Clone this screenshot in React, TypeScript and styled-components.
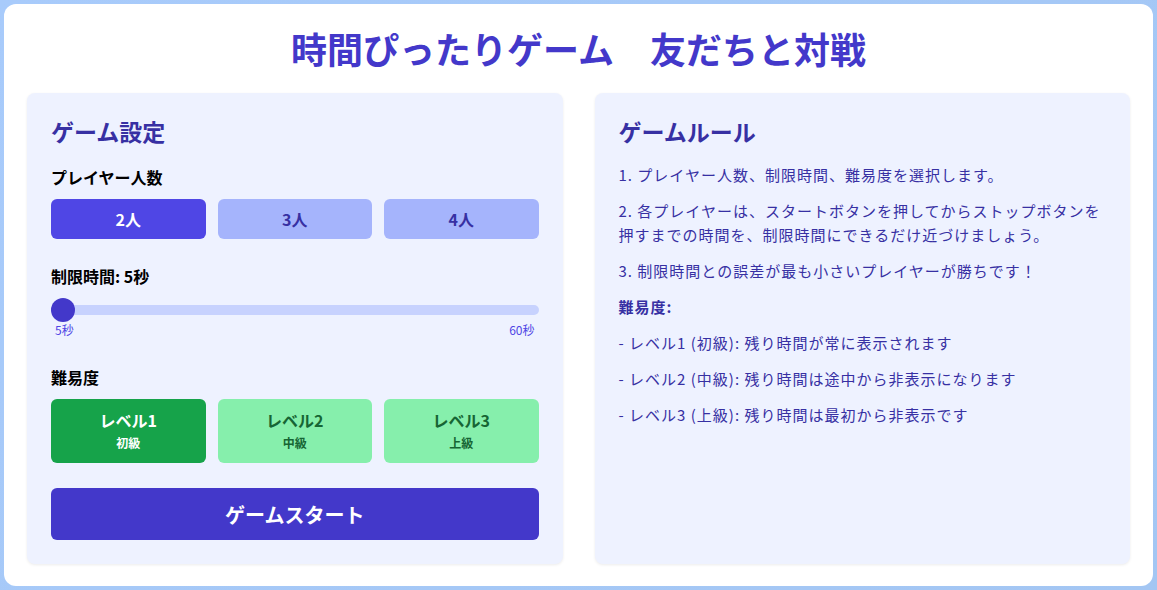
import React, { useState } from 'react';
import styled, { createGlobalStyle } from 'styled-components';

const GlobalStyle = createGlobalStyle`
  * {
    box-sizing: border-box;
  }
  body {
    margin: 0;
    background: linear-gradient(135deg, #a8cbfb 0%, #a3c6f3 100%);
    font-family: "Noto Sans CJK JP", "Noto Sans", sans-serif;
  }
`;

const players = [2, 3, 4];
const levels = [
  { name: 'レベル1', sub: '初級' },
  { name: 'レベル2', sub: '中級' },
  { name: 'レベル3', sub: '上級' },
];

function App() {
  const [playerCount, setPlayerCount] = useState(2);
  const [seconds, setSeconds] = useState(5);
  const [level, setLevel] = useState(0);

  return (
    <>
      <GlobalStyle />
      <Page>
        <Title>時間ぴったりゲーム　友だちと対戦</Title>
        <Columns>
          <Panel>
            <PanelTitle>ゲーム設定</PanelTitle>
            <Label>プレイヤー人数</Label>
            <ButtonRow>
              {players.map((n) => (
                <PlayerButton
                  key={n}
                  $active={n === playerCount}
                  onClick={() => setPlayerCount(n)}
                >
                  {n}人
                </PlayerButton>
              ))}
            </ButtonRow>
            <Label>制限時間: {seconds}秒</Label>
            <Slider
              type="range"
              min={5}
              max={60}
              value={seconds}
              onChange={(e) => setSeconds(Number(e.target.value))}
            />
            <SliderLabels>
              <span>5秒</span>
              <span>60秒</span>
            </SliderLabels>
            <Label>難易度</Label>
            <ButtonRow>
              {levels.map((l, i) => (
                <LevelButton
                  key={l.name}
                  $active={i === level}
                  onClick={() => setLevel(i)}
                >
                  <LevelName>{l.name}</LevelName>
                  <LevelSub>{l.sub}</LevelSub>
                </LevelButton>
              ))}
            </ButtonRow>
            <StartButton>ゲームスタート</StartButton>
          </Panel>
          <Panel>
            <PanelTitle>ゲームルール</PanelTitle>
            <Rules>
              <Rule>1. プレイヤー人数、制限時間、難易度を選択します。</Rule>
              <Rule>
                2. 各プレイヤーは、スタートボタンを押してからストップボタンを押すまでの時間を、制限時間にできるだけ近づけましょう。
              </Rule>
              <Rule>3. 制限時間との誤差が最も小さいプレイヤーが勝ちです！</Rule>
              <Rule $bold>難易度:</Rule>
              <Rule>- レベル1 (初級): 残り時間が常に表示されます</Rule>
              <Rule>- レベル2 (中級): 残り時間は途中から非表示になります</Rule>
              <Rule>- レベル3 (上級): 残り時間は最初から非表示です</Rule>
            </Rules>
          </Panel>
        </Columns>
      </Page>
    </>
  );
}

export default App;

const Page = styled.div`
  margin: 4px;
  height: 582px;
  background: #ffffff;
  border-radius: 12px;
  padding: 23px 23px 23px;
  display: flex;
  flex-direction: column;
`;

const Title = styled.h1`
  margin: 0 0 24px;
  text-align: center;
  font-size: 36px;
  line-height: 42px;
  font-weight: 700;
  color: #4338ca;
  white-space: pre;
`;

const Columns = styled.div`
  flex: 1;
  display: grid;
  grid-template-columns: 1fr 1fr;
  gap: 32px;
`;

const Panel = styled.div`
  background: #eef2ff;
  border-radius: 8px;
  padding: 22px 24px 24px;
  box-shadow: 0 1px 3px rgba(0, 0, 0, 0.08);
`;

const PanelTitle = styled.h2`
  margin: 0 0 17px;
  font-size: 23px;
  line-height: 33px;
  font-weight: 700;
  color: #3730a3;
`;

const Label = styled.div`
  font-size: 16px;
  line-height: 24px;
  font-weight: 700;
  color: #000000;
  margin-bottom: 10px;
`;

const ButtonRow = styled.div`
  display: grid;
  grid-template-columns: repeat(3, 1fr);
  gap: 12px;
  margin-bottom: 25px;
`;

const PlayerButton = styled.button<{ $active: boolean }>`
  height: 40px;
  border: none;
  border-radius: 6px;
  font-family: inherit;
  font-size: 16px;
  font-weight: 700;
  cursor: pointer;
  background: ${(p) => (p.$active ? '#4f46e5' : '#a5b4fc')};
  color: ${(p) => (p.$active ? '#ffffff' : '#3730a3')};
`;

const Slider = styled.input`
  -webkit-appearance: none;
  appearance: none;
  display: block;
  width: 100%;
  height: 10px;
  margin: 17px 0 7px;
  border-radius: 5px;
  background: #c7d2fe;
  outline: none;

  &::-webkit-slider-thumb {
    -webkit-appearance: none;
    appearance: none;
    width: 24px;
    height: 24px;
    border-radius: 50%;
    background: #4338ca;
    cursor: pointer;
  }
`;

const SliderLabels = styled.div`
  display: flex;
  justify-content: space-between;
  padding: 0 4px;
  font-size: 12px;
  line-height: 16px;
  color: #4f46e5;
  margin-bottom: 27px;
`;

const LevelButton = styled.button<{ $active: boolean }>`
  height: 64px;
  border: none;
  border-radius: 6px;
  font-family: inherit;
  cursor: pointer;
  display: flex;
  flex-direction: column;
  align-items: center;
  justify-content: center;
  background: ${(p) => (p.$active ? '#16a34a' : '#86efac')};
  color: ${(p) => (p.$active ? '#ffffff' : '#166534')};
`;

const LevelName = styled.span`
  font-size: 16px;
  line-height: 24px;
  font-weight: 700;
`;

const LevelSub = styled.span`
  font-size: 12px;
  line-height: 22px;
  font-weight: 700;
`;

const StartButton = styled.button`
  display: block;
  width: 100%;
  height: 52px;
  margin-top: 0;
  border: none;
  border-radius: 6px;
  background: #4338ca;
  color: #ffffff;
  font-family: inherit;
  font-size: 20px;
  font-weight: 700;
  cursor: pointer;
`;

const Rules = styled.div`
  max-width: 484px;
  margin-top: -2px;
`;

const Rule = styled.p<{ $bold?: boolean }>`
  margin: 0 0 12px;
  font-size: 15px;
  line-height: 24px;
  letter-spacing: 1px;
  color: #3730a3;
  font-weight: ${(p) => (p.$bold ? 700 : 400)};
`;
